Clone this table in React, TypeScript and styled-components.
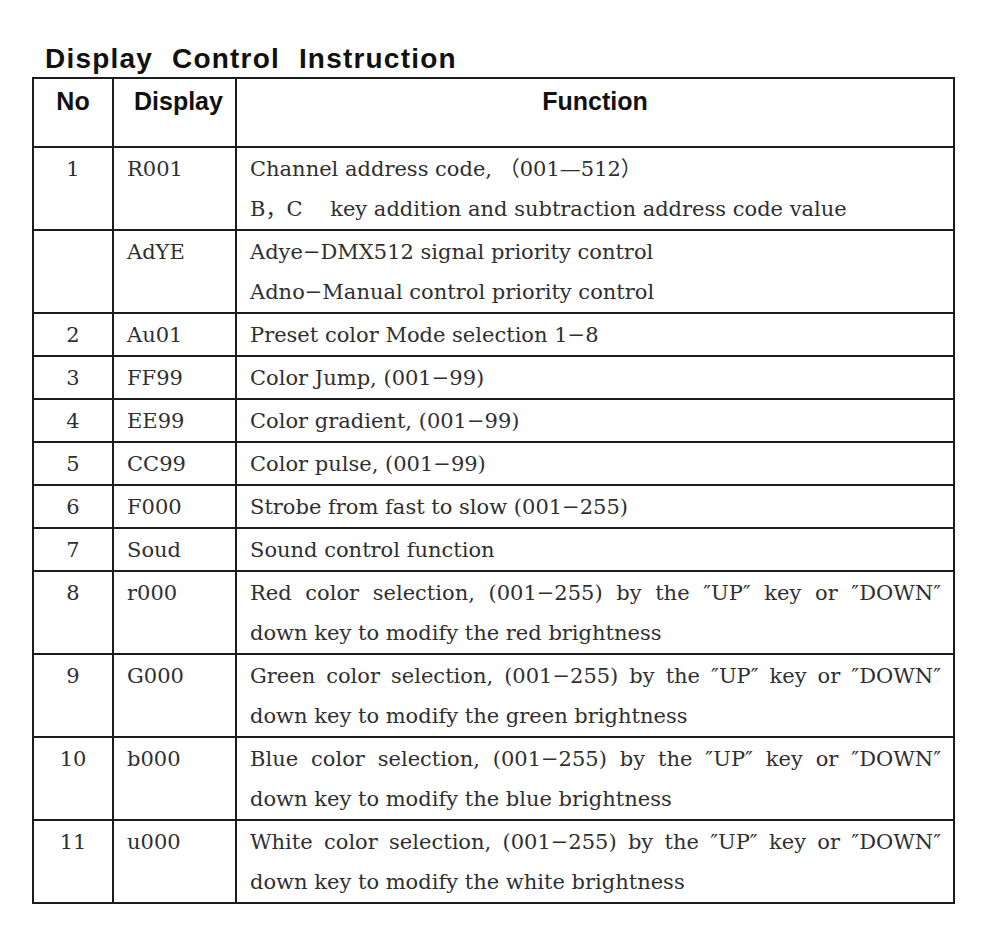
import styled, { createGlobalStyle } from 'styled-components';

interface Row {
  no: string;
  display: string;
  lines: string[];
  justify?: boolean;
}

const rows: Row[] = [
  {
    no: '1',
    display: 'R001',
    lines: ['Channel address code, （001—512）', 'B，C\u3000 key addition and subtraction address code value'],
  },
  {
    no: '',
    display: 'AdYE',
    lines: ['Adye−DMX512 signal priority control', 'Adno−Manual control priority control'],
  },
  { no: '2', display: 'Au01', lines: ['Preset color Mode selection 1−8'] },
  { no: '3', display: 'FF99', lines: ['Color Jump, (001−99)'] },
  { no: '4', display: 'EE99', lines: ['Color gradient, (001−99)'] },
  { no: '5', display: 'CC99', lines: ['Color pulse, (001−99)'] },
  { no: '6', display: 'F000', lines: ['Strobe from fast to slow (001−255)'] },
  { no: '7', display: 'Soud', lines: ['Sound control function'] },
  {
    no: '8',
    display: 'r000',
    justify: true,
    lines: ['Red color selection, (001−255) by the ″UP″ key or ″DOWN″', 'down key to modify the red brightness'],
  },
  {
    no: '9',
    display: 'G000',
    justify: true,
    lines: ['Green color selection, (001−255) by the ″UP″ key or ″DOWN″', 'down key to modify the green brightness'],
  },
  {
    no: '10',
    display: 'b000',
    justify: true,
    lines: ['Blue color selection, (001−255) by the ″UP″ key or ″DOWN″', 'down key to modify the blue brightness'],
  },
  {
    no: '11',
    display: 'u000',
    justify: true,
    lines: ['White color selection, (001−255) by the ″UP″ key or ″DOWN″', 'down key to modify the white brightness'],
  },
];

const GlobalStyle = createGlobalStyle`
  body {
    margin: 0;
    background: #ffffff;
  }
`;

const Page = styled.div`
  padding: 41px 0 0 32px;
  width: 923px;
`;

const Title = styled.h1`
  margin: 0 0 0 13px;
  font-family: 'Liberation Sans', Arial, sans-serif;
  font-weight: bold;
  font-size: 28px;
  line-height: 36px;
  letter-spacing: 1.2px;
  word-spacing: 10px;
  color: #111;
`;

const Table = styled.table`
  width: 923px;
  border-collapse: collapse;
  border: 2px solid #1c1c1c;
  table-layout: fixed;
`;

const HeadRow = styled.tr`
  height: 69px;
`;

const Head = styled.th<{ $align: 'left' | 'center' }>`
  border: 2px solid #1c1c1c;
  padding: 7px 0 0 ${(p) => (p.$align === 'left' ? '20px' : '0')};
  vertical-align: top;
  text-align: ${(p) => p.$align};
  font-family: 'Liberation Sans', Arial, sans-serif;
  font-weight: bold;
  font-size: 25px;
  line-height: 30px;
  color: #111;
`;

const Cell = styled.td<{ $center?: boolean }>`
  border: 2px solid #1c1c1c;
  padding: 1px ${(p) => (p.$center ? '0' : '12px')} 0 ${(p) => (p.$center ? '0' : '13px')};
  vertical-align: top;
  text-align: ${(p) => (p.$center ? 'center' : 'left')};
  font-family: 'DejaVu Serif', 'Liberation Serif', 'Noto Sans CJK SC', serif;
  font-size: 21px;
  line-height: 40px;
  color: #2f2f2f;
  white-space: nowrap;
`;

const Line = styled.div<{ $justify?: boolean }>`
  text-align: ${(p) => (p.$justify ? 'justify' : 'left')};
  text-align-last: ${(p) => (p.$justify ? 'justify' : 'auto')};
  white-space: ${(p) => (p.$justify ? 'normal' : 'pre')};
`;

const App = () => {
  return (
    <>
      <GlobalStyle />
      <Page>
        <Title>Display Control Instruction</Title>
        <Table>
          <colgroup>
            <col style={{ width: 80 }} />
            <col style={{ width: 123 }} />
            <col />
          </colgroup>
          <thead>
            <HeadRow>
              <Head $align="center">No</Head>
              <Head $align="left">Display</Head>
              <Head $align="center">Function</Head>
            </HeadRow>
          </thead>
          <tbody>
            {rows.map((row, i) => (
              <tr key={i}>
                <Cell $center>{row.no}</Cell>
                <Cell>{row.display}</Cell>
                <Cell>
                  {row.lines.map((line, j) => (
                    <Line key={j} $justify={row.justify && j === 0}>
                      {line}
                    </Line>
                  ))}
                </Cell>
              </tr>
            ))}
          </tbody>
        </Table>
      </Page>
    </>
  );
};

export default App;
